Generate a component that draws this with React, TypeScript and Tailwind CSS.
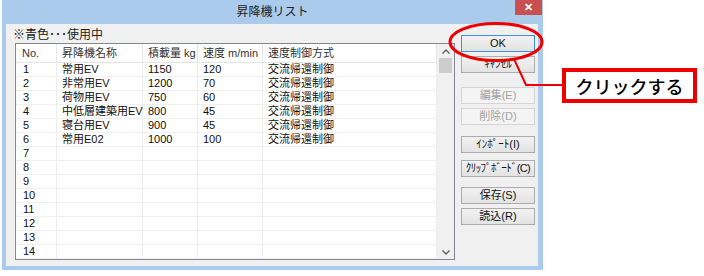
const rows: string[][] = [
  ["1", "常用EV", "1150", "120", "交流帰還制御"],
  ["2", "非常用EV", "1200", "70", "交流帰還制御"],
  ["3", "荷物用EV", "750", "60", "交流帰還制御"],
  ["4", "中低層建築用EV", "800", "45", "交流帰還制御"],
  ["5", "寝台用EV", "900", "45", "交流帰還制御"],
  ["6", "常用E02", "1000", "100", "交流帰還制御"],
  ["7", "", "", "", ""],
  ["8", "", "", "", ""],
  ["9", "", "", "", ""],
  ["10", "", "", "", ""],
  ["11", "", "", "", ""],
  ["12", "", "", "", ""],
  ["13", "", "", "", ""],
  ["14", "", "", "", ""],
];

const headers = ["No.", "昇降機名称", "積載量 kg", "速度 m/min", "速度制御方式"];

const cols = "grid grid-cols-[41px_86px_55px_65px_1fr]";

function Button({ label, disabled = false, focused = false, className = "" }: { label: string; disabled?: boolean; focused?: boolean; className?: string }) {
  const base = "h-[17px] w-[74px] flex items-center justify-center text-[11px] leading-[13px] border";
  const look = disabled
    ? "border-[#d5d5d5] bg-[#f4f4f4] text-[#a3a3a3]"
    : focused
      ? "border-[#3c8ee6] bg-gradient-to-b from-[#f2f2f2] to-[#e3e3e3] text-[#111]"
      : "border-[#acacac] bg-gradient-to-b from-[#f2f2f2] to-[#e3e3e3] text-[#111]";
  return <div className={`${base} ${look} ${className}`}>{label}</div>;
}

function Chevron({ up }: { up?: boolean }) {
  return (
    <svg width="8" height="5" viewBox="0 0 8 5">
      <polyline
        points={up ? "0.5,4.5 4,1 7.5,4.5" : "0.5,0.5 4,4 7.5,0.5"}
        fill="none"
        stroke="#606060"
        strokeWidth="1.4"
      />
    </svg>
  );
}

export default function App() {
  return (
    <div className="relative w-[704px] h-[276px] bg-white overflow-hidden font-['Liberation_Sans','Noto_Sans_CJK_JP',sans-serif] text-black">
      {/* window */}
      <div className="ml-[2px] w-[541px] h-[270px] bg-[#aacbeb] flex flex-col">
        <div className="h-[24px] grid grid-cols-[1fr_auto_1fr] items-start">
          <div />
          <div className="pt-[4px] text-[12px] leading-[16px] text-[#222]">昇降機リスト</div>
          <div className="flex justify-end pr-[1px]">
            <div className="w-[27px] h-[15px] bg-[#c75050] flex items-center justify-center text-white text-[11px] font-bold leading-none">✕</div>
          </div>
        </div>

        <div className="ml-[4px] mr-[5px] mb-[4px] flex-1 bg-[#f0f0f0] flex">
          <div className="w-[449px] pt-[3px]">
            <div className="h-[16px] pl-[7px] text-[12px] leading-[16px] text-[#222]">※青色･･･使用中</div>

            <div className="ml-[9px] w-[440px] h-[217px] border border-[#828790] bg-white flex">
              <div className="flex-1 flex flex-col">
                <div className={`${cols} h-[19px] border-b border-[#e5e5e5]`}>
                  {headers.map((h, i) => (
                    <div
                      key={h}
                      className={`text-[11px] leading-[18px] text-[#333] whitespace-nowrap border-r border-[#e5e5e5] ${i === 0 ? "pl-[6px]" : "pl-[5px]"}`}
                    >
                      {h}
                    </div>
                  ))}
                </div>
                {rows.map((r) => (
                  <div key={r[0]} className={`${cols} h-[14px] border-b border-[#f0f0f0]`}>
                    {r.map((c, i) => (
                      <div
                        key={i}
                        className={`text-[11px] leading-[13px] text-[#111] whitespace-nowrap border-r border-[#ededed] ${i === 0 ? "pl-[7px]" : "pl-[5px]"}`}
                      >
                        {c}
                      </div>
                    ))}
                  </div>
                ))}
              </div>

              {/* scrollbar */}
              <div className="w-[17px] bg-[#f0f0f0] flex flex-col">
                <div className="h-[14px] flex items-center justify-center">
                  <Chevron up />
                </div>
                <div className="mx-[2px] h-[15px] bg-[#cdcdcd]" />
                <div className="flex-1" />
                <div className="h-[14px] flex items-center justify-center">
                  <Chevron />
                </div>
              </div>
            </div>
          </div>

          <div className="pl-[6px] pt-[11px] flex flex-col">
            <Button label="OK" focused />
            <Button label="ｷｬﾝｾﾙ" className="mt-[4px]" />
            <Button label="編集(E)" disabled className="mt-[14px]" />
            <Button label="削除(D)" disabled className="mt-[4px]" />
            <Button label="ｲﾝﾎﾟｰﾄ(I)" className="mt-[11px]" />
            <Button label="ｸﾘｯﾌﾟﾎﾞｰﾄﾞ(C)" className="mt-[7px] tracking-[-0.6px]" />
            <Button label="保存(S)" className="mt-[10px]" />
            <Button label="読込(R)" className="mt-[4px]" />
          </div>
        </div>
      </div>

      {/* annotation: ellipse and leader line */}
      <svg className="absolute inset-0 pointer-events-none" width="704" height="276" viewBox="0 0 704 276">
        <ellipse cx="496" cy="42" rx="46" ry="18.5" fill="none" stroke="#ee0000" strokeWidth="3" />
        <polyline points="514,59 526,85 563,85" fill="none" stroke="#ee0000" strokeWidth="2" />
      </svg>

      {/* annotation: callout */}
      <div className="absolute left-[562px] top-[68px] w-[135px] h-[35px] border-4 border-[#ee0000] bg-white flex items-center justify-center font-['Noto_Sans_CJK_JP',sans-serif] font-medium text-[18px] leading-[22px] text-black">
        クリックする
      </div>
    </div>
  );
}
